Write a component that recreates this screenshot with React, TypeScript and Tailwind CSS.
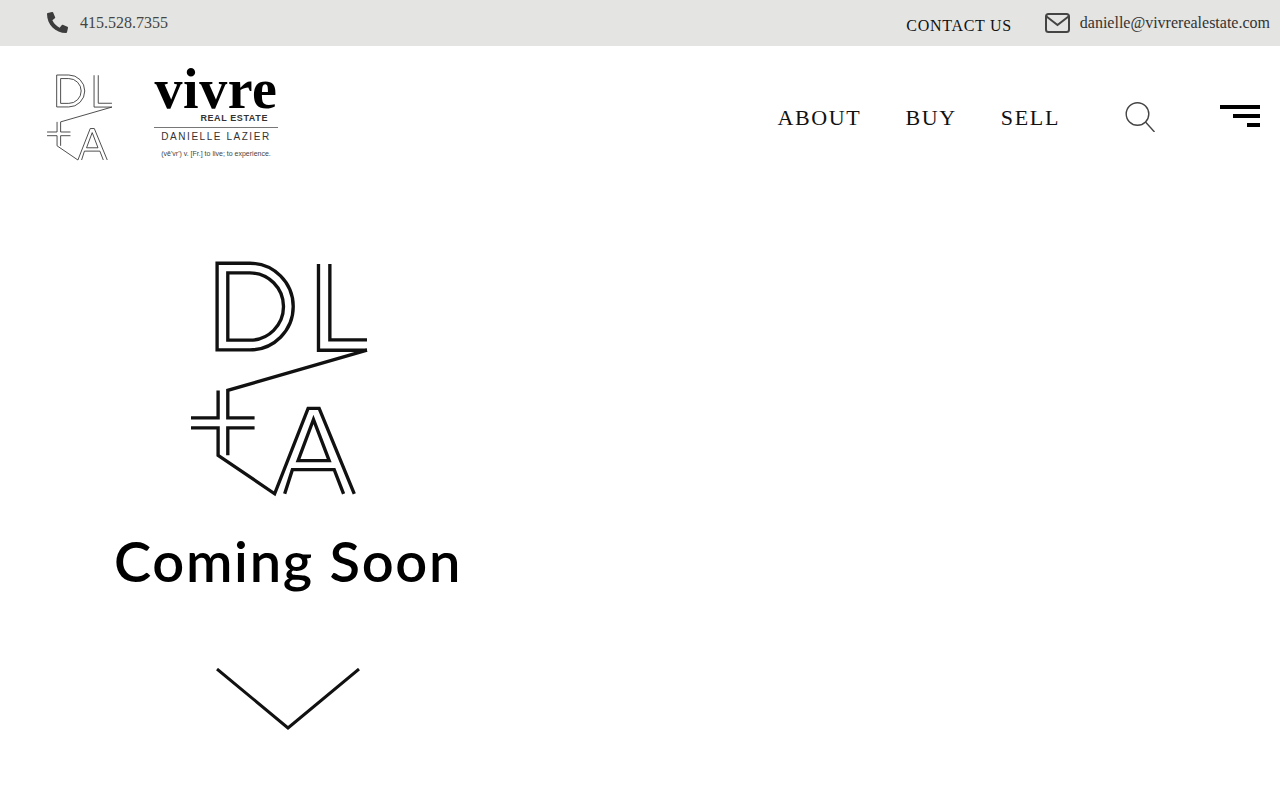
import { FaPhoneAlt } from "react-icons/fa";

const serif = "font-['Liberation_Serif',serif]";
const sans = "font-['Liberation_Sans',sans-serif]";

// double-line DL+A monogram, coordinates are shared by the small and large versions
function Monogram({ className, strokeWidth, color }: { className: string; strokeWidth: number; color: string }) {
  return (
    <svg viewBox="62 38 526 689" className={`${className} overflow-visible`} fill="none" stroke={color} strokeWidth={strokeWidth} strokeLinejoin="miter">
      <path d="M140 38H238A129.500 129.500 0 0 1 238 297H140Z" />
      <path d="M172 67H238A100.500 100.500 0 0 1 238 268H172Z" />
      <path d="M443 40V298H588" />
      <path d="M477 40V267H588" />
      <path d="M588 298L172 418V500H252" />
      <path d="M143 418V500H62" />
      <path d="M62 530H143V612L312 727L412 472H445L550 727" />
      <path d="M252 530H172V612" />
      <path d="M428 505L382 628H475Z" />
      <path d="M342 727L365 655H490L518 727" />
    </svg>
  );
}

function VivreLogo() {
  return (
    <div className="flex w-[124px] flex-col text-black">
      <div className={`${serif} h-[37px] text-center text-[56px] leading-[24px] font-bold tracking-[0.5px] whitespace-nowrap`}>vivre</div>
      <div className={`${sans} pr-[10px] text-right text-[9px] leading-[9px] font-bold tracking-[0.6px] text-[#333]`}>REAL ESTATE</div>
      <div className="mt-[4px] h-px bg-[#777]" />
      <div className={`${sans} mt-[4px] text-center text-[10px] leading-[10px] tracking-[1.55px] whitespace-nowrap text-[#333]`}>DANIELLE LAZIER</div>
      <div className={`${sans} mt-[8px] text-center text-[7px] leading-[8px] whitespace-nowrap text-[#444]`}>(vē'vr') v. [Fr.] to live; to experience.</div>
    </div>
  );
}

export default function App() {
  return (
    <div className="min-h-[800px] overflow-hidden bg-white">
      {/* top contact bar */}
      <div className={`${serif} flex h-[46px] items-center justify-between bg-[#e4e4e2] pr-[10px] pl-[47px]`}>
        <div className="mb-[1px] flex items-center gap-[12px] text-[16px] text-[#444]">
          <FaPhoneAlt className="mb-[1px] h-[21px] w-[21px] text-[#3c3c3c]" />
          <span>415.528.7355</span>
        </div>
        <div className="flex items-center">
          <span className="mt-[6px] mr-[33px] text-[16px] tracking-[0.7px] text-[#111]">CONTACT US</span>
          <svg viewBox="0 0 25 20" className="mr-[10px] h-[20px] w-[25px]" fill="none" stroke="#444" strokeWidth="2">
            <rect x="1" y="1" width="23" height="18" rx="2.500" />
            <path d="M1.500 3.500L12.500 12L23.500 3.500" />
          </svg>
          <span className="mb-[1px] text-[16px] text-[#333]">danielle@vivrerealestate.com</span>
        </div>
      </div>

      {/* logo + nav */}
      <div className="flex h-[143px] items-center justify-between pr-[20px] pl-[47px]">
        <div className="flex items-center gap-[42px]">
          <Monogram className="h-[85px] w-[65px]" strokeWidth={7} color="#333" />
          <VivreLogo />
        </div>
        <div className="flex items-center">
          <nav className={`${serif} flex gap-[44px] text-[22px] tracking-[1.65px] text-[#111]`}>
            <a>ABOUT</a>
            <a>BUY</a>
            <a>SELL</a>
          </nav>
          <svg viewBox="0 0 30 30" className="mr-[65px] mb-[2px] ml-[65px] h-[30px] w-[30px]" fill="none" stroke="#444" strokeWidth="1.4">
            <circle cx="12.500" cy="12" r="11.300" />
            <path d="M20.500 20L29.500 30" />
          </svg>
          <div className="mb-[4px] flex w-[40px] flex-col items-end gap-[5px]">
            <div className="h-[4px] w-[40px] bg-black" />
            <div className="h-[4px] w-[27px] bg-black" />
            <div className="h-[4px] w-[13px] bg-black" />
          </div>
        </div>
      </div>

      {/* coming soon block */}
      <div className="flex w-[576px] flex-col items-center pt-[74px]">
        <Monogram className="mr-[18px] h-[231px] w-[176px]" strokeWidth={10} color="#111" />
        <div className="mt-[32px] font-['Lato',sans-serif] text-[56px] leading-[70px] font-semibold tracking-[1.7px] whitespace-nowrap text-black">Coming Soon</div>
        <svg viewBox="0 0 144 62" className="mt-[72px] h-[62px] w-[144px]" fill="none" stroke="#111" strokeWidth="3">
          <path d="M1 1L72 60L143 1" />
        </svg>
      </div>
    </div>
  );
}
